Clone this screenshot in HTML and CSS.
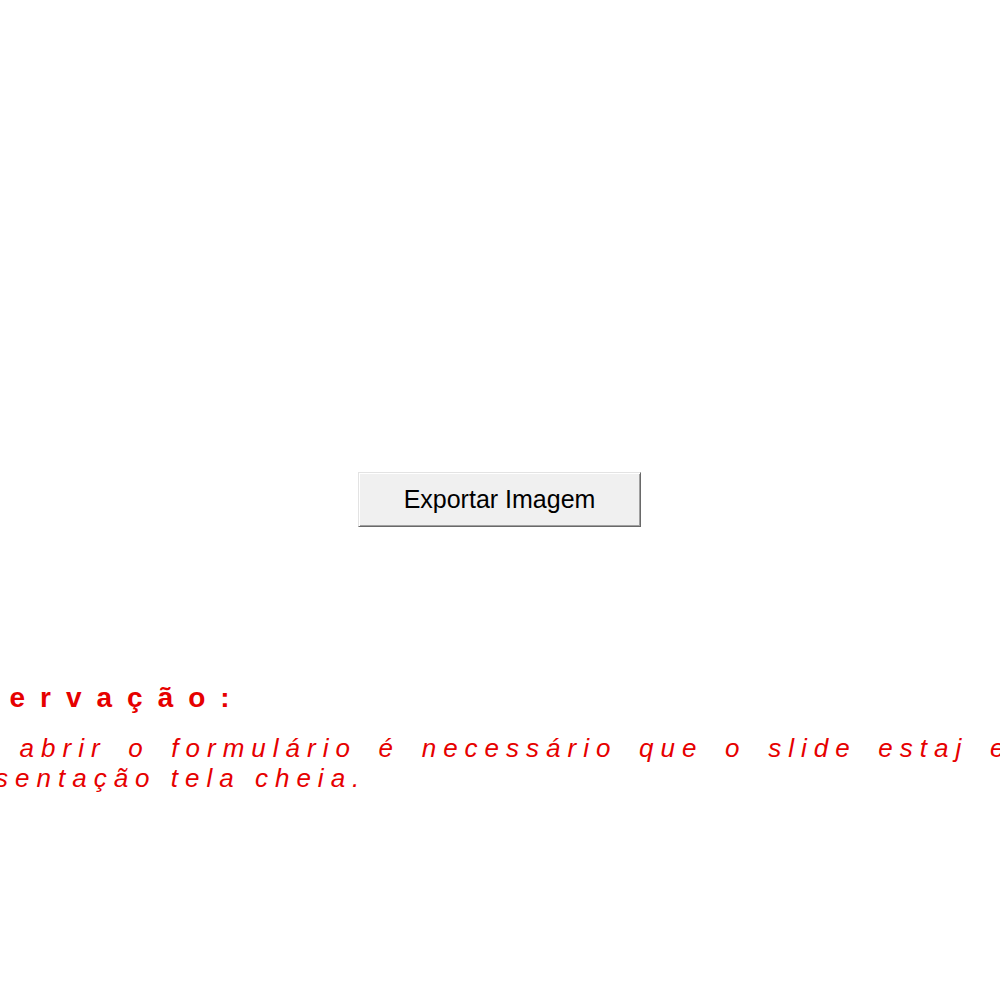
FILE: index.html
```html
<!DOCTYPE html>
<html lang="pt">
<head>
<meta charset="utf-8">
<title>Exportar Imagem</title>
<link rel="stylesheet" href="styles.css">
</head>
<body>
<main class="page">
  <div class="stage">
    <button class="btn" type="button">Exportar Imagem</button>
  </div>
  <section class="note">
    <h2 class="note-title">Observação:</h2>
    <p class="note-text">Para abrir o formulário é necessário que o slide estaj em apresentação tela cheia.</p>
  </section>
</main>
</body>
</html>
```
FILE: styles.css
```css
html, body {
  margin: 0;
  padding: 0;
  background: #ffffff;
}

.page {
  width: 1000px;
  height: 1000px;
  overflow: hidden;
  display: flex;
  flex-direction: column;
}

.stage {
  padding-top: 472px;
  display: flex;
  justify-content: center;
}

.btn {
  box-sizing: border-box;
  width: 283px;
  height: 55px;
  margin-left: -1px;
  background: #f0f0f0;
  border-style: solid;
  border-width: 1px;
  border-color: #e3e3e3 #696969 #696969 #e3e3e3;
  box-shadow: inset 1px 1px 0 #ffffff, inset -1px -1px 0 #a0a0a0;
  font-family: "Liberation Sans", Arial, sans-serif;
  font-size: 25px;
  color: #000000;
  padding: 0;
  cursor: default;
}

.note {
  margin-top: 154px;
  margin-left: -85px;
  width: 1125px;
  color: #e60000;
  font-family: "Liberation Sans", Arial, sans-serif;
}

.note-title {
  margin: 0 0 0 -5px;
  font-size: 28px;
  line-height: 34px;
  font-weight: bold;
  letter-spacing: 15px;
}

.note-text {
  margin: 18px 0 0;
  font-size: 26px;
  line-height: 30px;
  font-style: italic;
  letter-spacing: 7px;
  text-align: justify;
}
```
